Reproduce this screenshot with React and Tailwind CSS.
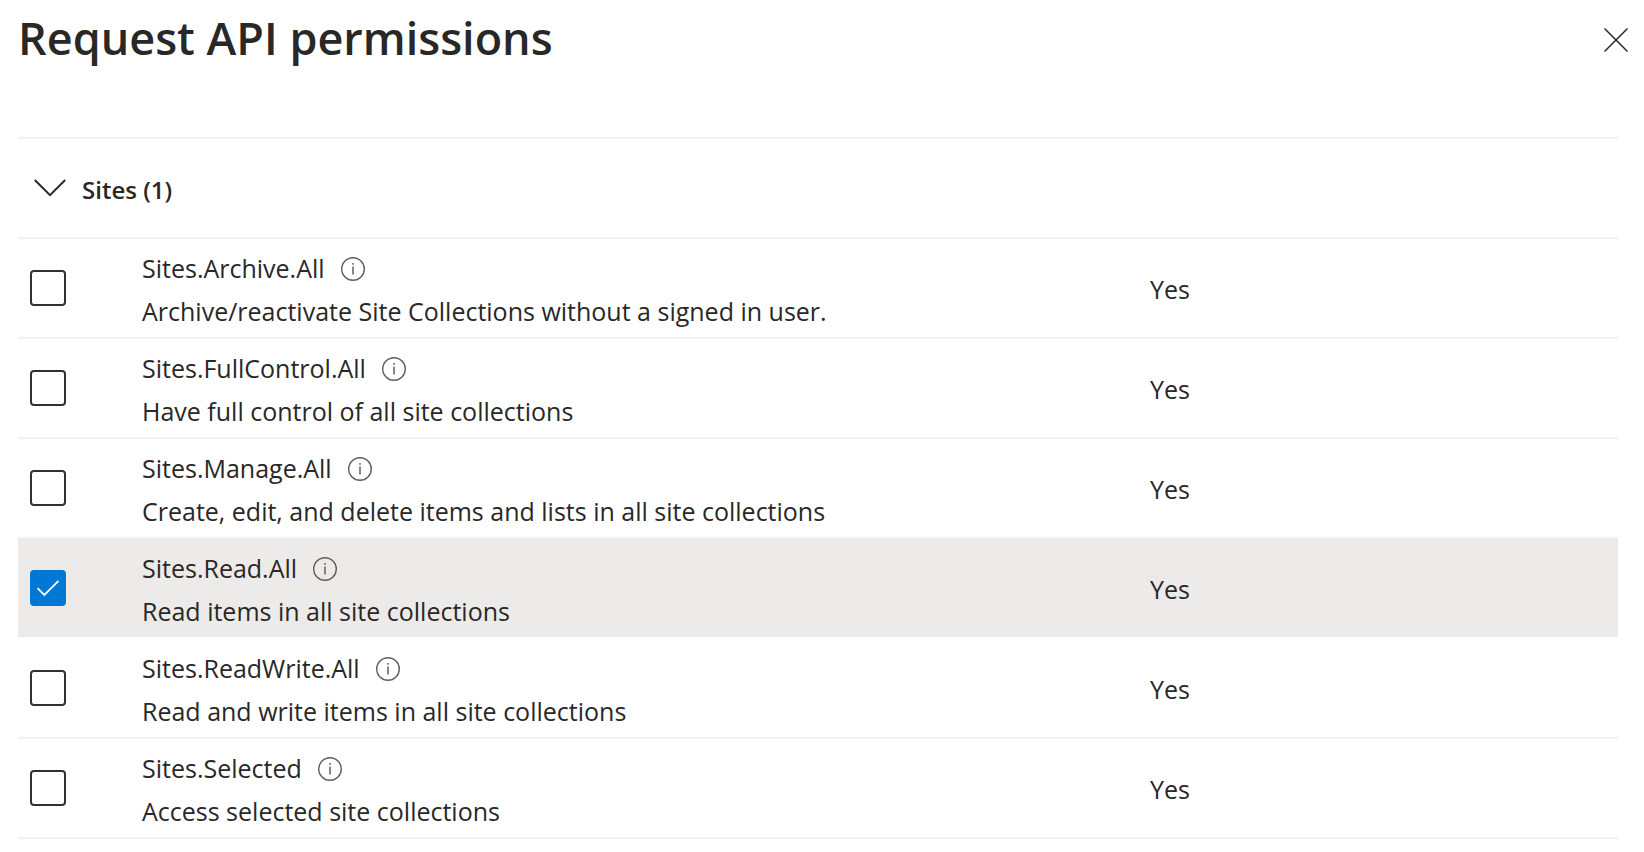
import { useState } from "react";

const permissions = [
  { name: "Sites.Archive.All", description: "Archive/reactivate Site Collections without a signed in user.", consent: "Yes" },
  { name: "Sites.FullControl.All", description: "Have full control of all site collections", consent: "Yes" },
  { name: "Sites.Manage.All", description: "Create, edit, and delete items and lists in all site collections", consent: "Yes" },
  { name: "Sites.Read.All", description: "Read items in all site collections", consent: "Yes" },
  { name: "Sites.ReadWrite.All", description: "Read and write items in all site collections", consent: "Yes" },
  { name: "Sites.Selected", description: "Access selected site collections", consent: "Yes" },
];

function CloseIcon() {
  return (
    <svg width="24" height="24" viewBox="0 0 24 24" fill="none" stroke="#292827" strokeWidth="1.5" aria-hidden="true">
      <path d="M0.5 0.5 23.5 23.5M23.5 0.5 0.5 23.5" />
    </svg>
  );
}

function ChevronIcon() {
  return (
    <svg width="32" height="18" viewBox="0 0 32 18" fill="none" stroke="#292827" strokeWidth="2" aria-hidden="true">
      <path d="M0.8 1 16 16.2 31.2 1" />
    </svg>
  );
}

function InfoIcon() {
  return (
    <svg width="24" height="24" viewBox="0 0 24 24" fill="none" stroke="#605e5c" aria-hidden="true">
      <circle cx="12" cy="12" r="11.3" strokeWidth="1.4" />
      <path d="M12 9.5V17.5" strokeWidth="1.5" />
      <path d="M12 6V7.8" strokeWidth="1.5" />
    </svg>
  );
}

function CheckMark() {
  return (
    <svg
      className="pointer-events-none col-start-1 row-start-1"
      width="36"
      height="36"
      viewBox="0 0 36 36"
      fill="none"
      stroke="#ffffff"
      strokeWidth="1.8"
      aria-hidden="true"
    >
      <path d="M7.5 18.2 14.3 25 28.5 10.8" />
    </svg>
  );
}

function PermissionRow({ permission, checked, afterChecked, onToggle }) {
  const id = permission.name;
  return (
    <tr className={checked ? "bg-[#edebe9]" : "bg-white"}>
      <td className={afterChecked ? "h-[100px] border-t-2 border-white pl-3" : "h-[100px] border-t-2 border-[#f3f2f1] pl-3"}>
        <div className="grid size-9">
          <input
            id={id}
            type="checkbox"
            checked={checked}
            onChange={onToggle}
            className="col-start-1 row-start-1 size-9 appearance-none rounded border-2 border-[#323130] bg-white checked:border-[#0078d4] checked:bg-[#0078d4]"
          />
          {checked && <CheckMark />}
        </div>
      </td>
      <td className={afterChecked ? "border-t-2 border-white pt-1" : "border-t-2 border-[#f3f2f1] pt-1"}>
        <div className="flex items-center gap-4 leading-[43px]">
          <label htmlFor={id}>{permission.name}</label>
          <button type="button" aria-label={`About ${permission.name}`}>
            <InfoIcon />
          </button>
        </div>
        <p className="leading-[43px]">{permission.description}</p>
      </td>
      <td className={afterChecked ? "border-t-2 border-white pt-1" : "border-t-2 border-[#f3f2f1] pt-1"}>{permission.consent}</td>
    </tr>
  );
}

export default function App() {
  const [selected, setSelected] = useState(["Sites.Read.All"]);
  const [open, setOpen] = useState(true);
  const toggle = (name) =>
    setSelected((names) => (names.includes(name) ? names.filter((n) => n !== name) : [...names, name]));

  return (
    <main className="min-h-screen bg-white font-['Open_Sans',sans-serif] text-[25px] text-[#292827]">
      <header className="flex items-center justify-between pr-4 pl-4.5">
        <h1 className="pb-1 text-[45px] leading-[76px] font-semibold">Request API permissions</h1>
        <button type="button" aria-label="Close">
          <CloseIcon />
        </button>
      </header>
      <section className="mt-[57px] pr-6.5 pl-4.5">
        <h2 className="flex h-[100px] border-t-2 border-[#f3f2f1] text-2xl font-semibold">
          <button type="button" aria-expanded={open} onClick={() => setOpen(!open)} className="flex items-center gap-4 pl-4">
            <ChevronIcon />
            <span className="pt-1">Sites ({selected.length})</span>
          </button>
        </h2>
        {open && (
          <table className="w-full table-fixed border-separate border-spacing-0 border-b-2 border-[#f3f2f1] text-left">
            <colgroup>
              <col className="w-[124px]" />
              <col className="w-[63%]" />
              <col />
            </colgroup>
            <tbody>
              {permissions.map((p, i) => (
                <PermissionRow
                  key={p.name}
                  permission={p}
                  checked={selected.includes(p.name)}
                  afterChecked={i > 0 && selected.includes(permissions[i - 1].name)}
                  onToggle={() => toggle(p.name)}
                />
              ))}
            </tbody>
          </table>
        )}
      </section>
    </main>
  );
}
